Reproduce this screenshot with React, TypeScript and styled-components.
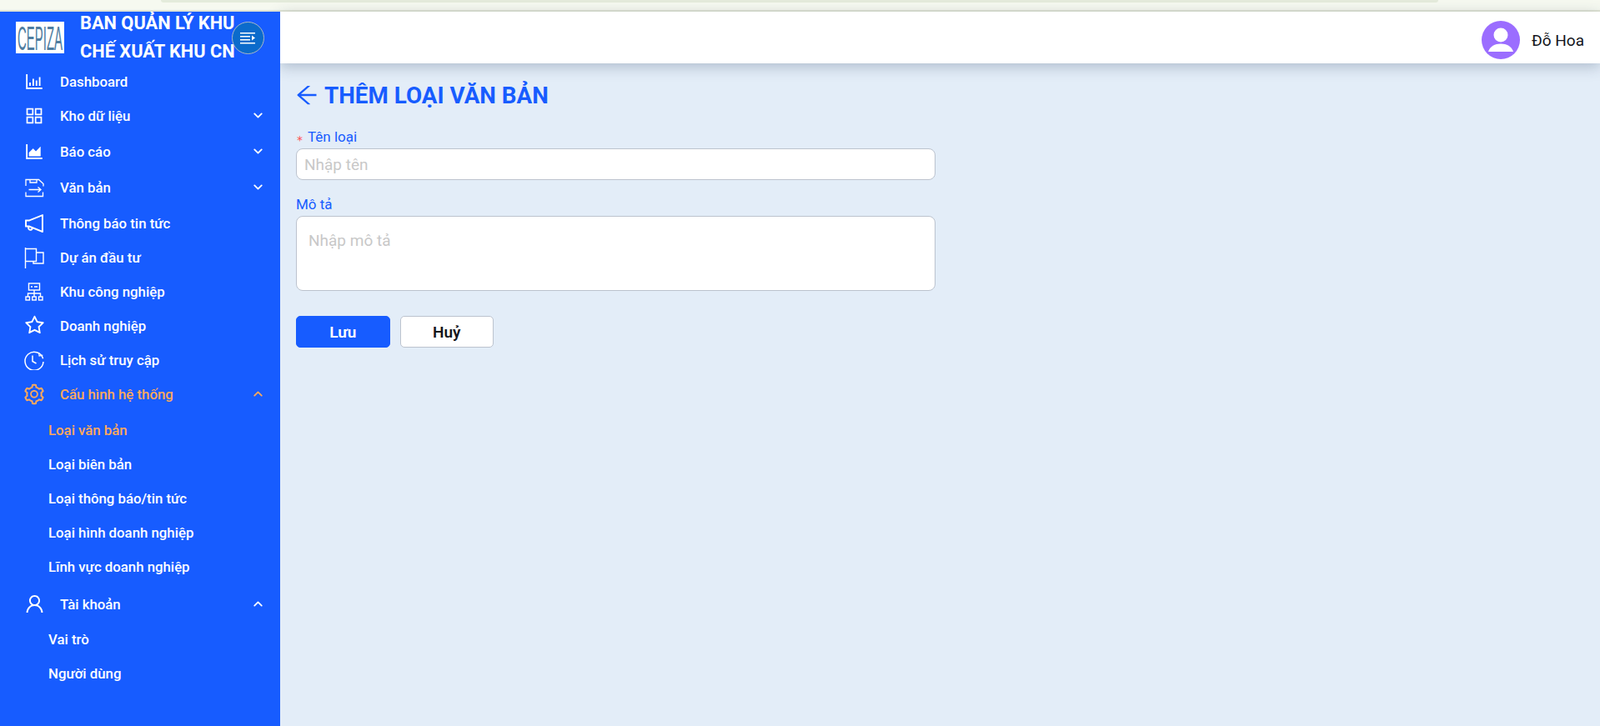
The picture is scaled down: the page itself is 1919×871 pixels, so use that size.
import * as React from 'react';
import styled, { createGlobalStyle } from 'styled-components';
import {
  AiOutlineAppstore,
  AiOutlineAreaChart,
  AiOutlineArrowLeft,
  AiOutlineBarChart,
  AiOutlineNotification,
  AiOutlineSetting,
  AiOutlineStar,
  AiOutlineUser,
} from 'react-icons/ai';
import { ChevronDown, ChevronUp } from 'lucide-react';

const GlobalStyle = createGlobalStyle`
  html, body {
    margin: 0;
    padding: 0;
    height: 100%;
    overflow: hidden;
  }
  body {
    font-family: Roboto, "Noto Sans", sans-serif;
  }
  * {
    box-sizing: border-box;
  }
`;

const orange = '#ffa95c';
const blue = '#175cff';

const SPage = styled.div`
  width: 1919px;
  height: 871px;
  display: flex;
  flex-direction: column;
  overflow: hidden;
`;

const SBrowserStrip = styled.div`
  height: 14px;
  flex: none;
  display: flex;
  justify-content: center;
  padding-right: 2px;
  background: #f6f9f0;
  border-bottom: 2px solid #e0e4d4;
`;

const SBrowserPill = styled.div`
  width: 1532px;
  height: 3px;
  background: #e4ebdb;
  border-radius: 0 0 8px 8px;
`;

const SBody = styled.div`
  flex: 1;
  display: flex;
  min-height: 0;
`;

const SSidebar = styled.aside`
  position: relative;
  width: 336px;
  flex: none;
  background: ${blue};
  color: #fff;
  overflow: hidden;
`;

const SBrand = styled.div`
  height: 61px;
  margin-bottom: 2px;
  display: flex;
  align-items: center;
  padding-left: 19px;
`;

const SLogo = styled.svg`
  width: 58px;
  height: 38px;
  flex: none;
  background: #fff;
`;

const SBrandName = styled.div`
  margin-left: 19px;
  font-size: 21.8px;
  font-weight: 700;
  line-height: 34px;
  white-space: nowrap;
`;

const SToggle = styled.button`
  position: absolute;
  left: 278px;
  top: 12px;
  width: 39px;
  height: 39px;
  padding: 0;
  display: flex;
  align-items: center;
  justify-content: center;
  border-radius: 50%;
  border: 1px solid #a9b8c4;
  background: #0b6bcb;
`;

const SRow = styled.div<{ $tall?: boolean; $active?: boolean; $gap?: boolean }>`
  height: ${({ $tall }) => ($tall ? 43 : 41)}px;
  margin-top: ${({ $gap }) => ($gap ? 3 : 0)}px;
  display: flex;
  align-items: center;
  padding: 0 18px ${({ $tall, $gap }) => ($tall && !$gap ? 2 : 0)}px 28px;
  color: ${({ $active }) => ($active ? orange : '#fff')};
  font-size: 16.8px;
  font-weight: 500;
`;

const SIconSlot = styled.span`
  width: 26px;
  height: 28px;
  flex: none;
  display: flex;
  align-items: center;
  justify-content: center;
  margin-right: 18px;
  & svg {
    flex: none;
  }
`;

const SRowLabel = styled.span`
  flex: 1;
  white-space: nowrap;
`;

const SSubRow = styled.div<{ $active?: boolean }>`
  height: 41px;
  display: flex;
  align-items: center;
  padding-left: 58px;
  color: ${({ $active }) => ($active ? orange : '#fff')};
  font-size: 16.8px;
  font-weight: 500;
  white-space: nowrap;
`;

const SMain = styled.main`
  flex: 1;
  min-width: 0;
  background: #e3edf8;
  display: flex;
  flex-direction: column;
`;

const STopbar = styled.header`
  height: 62px;
  flex: none;
  display: flex;
  align-items: center;
  justify-content: flex-end;
  padding: 6px 19px 0 0;
  background: #fff;
  box-shadow: 0 4px 16px rgba(40, 60, 90, 0.28);
`;

const SAvatar = styled.div`
  width: 46px;
  height: 46px;
  border-radius: 50%;
  overflow: hidden;
  background: #9b6dff;
`;

const SUserName = styled.span`
  margin-left: 14px;
  font-size: 19px;
  color: #14161c;
`;

const SContent = styled.div`
  padding: 17px 0 0 19px;
  width: 786px;
`;

const STitleRow = styled.div`
  height: 42px;
  display: flex;
  align-items: center;
  color: ${blue};
  & svg {
    flex: none;
    margin-left: -3px;
  }
`;

const STitle = styled.h1`
  margin: 0 0 0 5px;
  font-size: 27.8px;
  font-weight: 700;
  white-space: nowrap;
`;

const SForm = styled.div`
  margin-top: 19px;
  display: grid;
  gap: 19px;
`;

const SLabel = styled.label`
  display: block;
  height: 24px;
  line-height: 20px;
  font-size: 17px;
  color: ${blue};
  white-space: nowrap;
`;

const SRequired = styled.span`
  display: inline-block;
  width: 14px;
  padding-left: 1px;
  vertical-align: -3px;
  color: #ff4d4f;
  font-family: "DejaVu Sans", sans-serif;
  font-size: 14px;
  font-weight: 400;
`;

const SInput = styled.input`
  display: block;
  width: 100%;
  height: 38px;
  padding: 0 9px;
  border: 1px solid #bcc3ce;
  border-radius: 8px;
  background: #fff;
  font: 400 19px Roboto, sans-serif;
  &::placeholder {
    color: #c8c8c8;
    opacity: 1;
  }
`;

const STextarea = styled.textarea`
  display: block;
  width: 100%;
  height: 90px;
  padding: 17px 14px;
  border: 1px solid #bcc3ce;
  border-radius: 8px;
  background: #fff;
  resize: none;
  font: 400 19px/24px Roboto, sans-serif;
  &::placeholder {
    color: #c8c8c8;
    opacity: 1;
  }
`;

const SActions = styled.div`
  margin-top: 30px;
  display: flex;
  gap: 12px;
`;

const SButton = styled.button<{ $primary?: boolean }>`
  width: 112.5px;
  height: 38px;
  padding: 0;
  border: 1px solid ${({ $primary }) => ($primary ? blue : '#bcc3ce')};
  border-radius: 5px;
  background: ${({ $primary }) => ($primary ? blue : '#fff')};
  color: ${({ $primary }) => ($primary ? '#fff' : '#14161c')};
  font: 600 19px Roboto, sans-serif;
`;

const SaveIcon = () => (
  <svg width="24" height="24" viewBox="0 0 24 24" fill="none" stroke="currentColor" strokeWidth="1.3">
    <path d="M2 10V2.500h15.500L23 7.500v3" />
    <path d="M7 2.500v3.500h8V2.500" />
    <path d="M2 17.500V22.500H22.500V17.500" />
    <path d="M5.500 14.500H20M16.500 11.500l3.500 3-3.500 3" />
  </svg>
);

const FlagIcon = () => (
  <svg width="24" height="26" viewBox="0 0 24 26" fill="none" stroke="currentColor" strokeWidth="1.4">
    <path d="M1.500 1V26" />
    <path d="M1.500 2.500H14.500V17.500H1.500" />
    <path d="M14.500 7H23V20H11V17.500" />
  </svg>
);

const ClockIcon = () => (
  <svg width="24" height="24" viewBox="0 0 24 24" fill="none" stroke="currentColor" strokeWidth="1.500">
    <path d="M22.600 10.200A11 11 0 1 0 23 14" />
    <path d="M17.500 2.800l.6 4.200 4.200-.9" strokeWidth="1.200" />
    <path d="M10 6.500V13.500L14.500 16" />
  </svg>
);

const NetworkIcon = () => (
  <svg width="22" height="22" viewBox="0 0 22 22" fill="none" stroke="currentColor" strokeWidth="1.400">
    <rect x="4.500" y="1" width="13" height="8" />
    <path d="M7 5h2M11 5h4" />
    <path d="M11 9v4M3.500 17v-4h15v4M11 13v4" />
    <rect x="1" y="17" width="4.500" height="4" />
    <rect x="8.750" y="17" width="4.500" height="4" />
    <rect x="16.500" y="17" width="4.500" height="4" />
  </svg>
);

const ToggleIcon = () => (
  <svg width="19" height="14" viewBox="0 0 19 14" fill="#fff">
    <rect x="0" y="0" width="18" height="1.500" />
    <rect x="0" y="4" width="12" height="1.500" />
    <rect x="0" y="8" width="12" height="1.500" />
    <rect x="0" y="12" width="18" height="1.500" />
    <path d="M14 3.500l4 3-4 3z" />
  </svg>
);

const AvatarGlyph = () => (
  <svg width="46" height="46" viewBox="0 0 46 46" fill="#fff">
    <circle cx="23" cy="17" r="8.500" />
    <path d="M8 37c2-6.500 8-9.500 15-9.500s13 3 15 9.500z" />
  </svg>
);

interface IMenuItem {
  label: string;
  icon: React.ReactNode;
  chevron?: 'down' | 'up';
  active?: boolean;
  gap?: boolean;
  children?: { label: string; active?: boolean }[];
}

const menu: IMenuItem[] = [
  { label: 'Dashboard', icon: <AiOutlineBarChart size={26} /> },
  { label: 'Kho dữ liệu', icon: <AiOutlineAppstore size={26} />, chevron: 'down' },
  { label: 'Báo cáo', icon: <AiOutlineAreaChart size={26} />, chevron: 'down' },
  { label: 'Văn bản', icon: <SaveIcon />, chevron: 'down' },
  { label: 'Thông báo tin tức', icon: <AiOutlineNotification size={28} /> },
  { label: 'Dự án đầu tư', icon: <FlagIcon /> },
  { label: 'Khu công nghiệp', icon: <NetworkIcon /> },
  { label: 'Doanh nghiệp', icon: <AiOutlineStar size={27} /> },
  { label: 'Lịch sử truy cập', icon: <ClockIcon /> },
  {
    label: 'Cấu hình hệ thống',
    icon: <AiOutlineSetting size={28} />,
    chevron: 'up',
    active: true,
    children: [
      { label: 'Loại văn bản', active: true },
      { label: 'Loại biên bản' },
      { label: 'Loại thông báo/tin tức' },
      { label: 'Loại hình doanh nghiệp' },
      { label: 'Lĩnh vực doanh nghiệp' },
    ],
  },
  {
    label: 'Tài khoản',
    icon: <AiOutlineUser size={27} />,
    chevron: 'up',
    gap: true,
    children: [{ label: 'Vai trò' }, { label: 'Người dùng' }],
  },
];

const App = () => (
  <>
    <GlobalStyle />
    <SPage>
      <SBrowserStrip>
        <SBrowserPill />
      </SBrowserStrip>
      <SBody>
        <SSidebar>
          <SBrand>
            <SLogo viewBox="0 0 58 38">
              <text
                x="2"
                y="34"
                fontFamily="Liberation Sans, sans-serif"
                fontSize="41"
                fill="#4f7d9f"
                textLength="54"
                lengthAdjust="spacingAndGlyphs"
              >
                CEPIZA
              </text>
            </SLogo>
            <SBrandName>
              BAN QUẢN LÝ KHU
              <br />
              CHẾ XUẤT KHU CN
            </SBrandName>
          </SBrand>
          <SToggle aria-label="Thu gọn">
            <ToggleIcon />
          </SToggle>
          {menu.map((item) => (
            <React.Fragment key={item.label}>
              <SRow $tall={!!item.chevron} $active={item.active} $gap={item.gap}>
                <SIconSlot>{item.icon}</SIconSlot>
                <SRowLabel>{item.label}</SRowLabel>
                {item.chevron === 'down' && <ChevronDown size={17} strokeWidth={2.6} />}
                {item.chevron === 'up' && <ChevronUp size={17} strokeWidth={2.6} />}
              </SRow>
              {item.children?.map((child) => (
                <SSubRow key={child.label} $active={child.active}>
                  {child.label}
                </SSubRow>
              ))}
            </React.Fragment>
          ))}
        </SSidebar>
        <SMain>
          <STopbar>
            <SAvatar>
              <AvatarGlyph />
            </SAvatar>
            <SUserName>Đỗ Hoa</SUserName>
          </STopbar>
          <SContent>
            <STitleRow>
              <AiOutlineArrowLeft size={32} />
              <STitle>THÊM LOẠI VĂN BẢN</STitle>
            </STitleRow>
            <SForm>
              <div>
                <SLabel>
                  <SRequired>*</SRequired>Tên loại
                </SLabel>
                <SInput placeholder="Nhập tên" />
              </div>
              <div>
                <SLabel>Mô tả</SLabel>
                <STextarea placeholder="Nhập mô tả" />
              </div>
            </SForm>
            <SActions>
              <SButton $primary>Lưu</SButton>
              <SButton>Huỷ</SButton>
            </SActions>
          </SContent>
        </SMain>
      </SBody>
    </SPage>
  </>
);

export default App;
